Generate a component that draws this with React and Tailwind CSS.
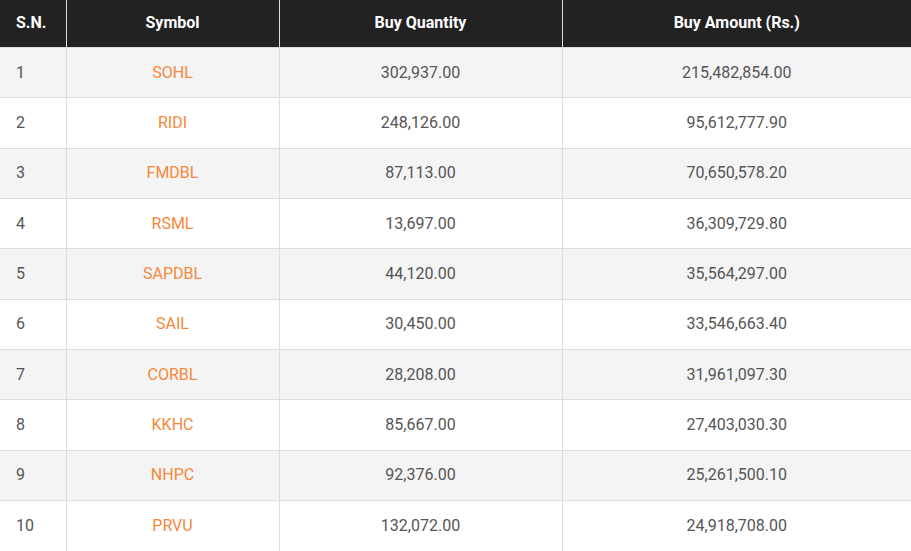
import React from "react";

const rows = [
  ["SOHL", "302,937.00", "215,482,854.00"],
  ["RIDI", "248,126.00", "95,612,777.90"],
  ["FMDBL", "87,113.00", "70,650,578.20"],
  ["RSML", "13,697.00", "36,309,729.80"],
  ["SAPDBL", "44,120.00", "35,564,297.00"],
  ["SAIL", "30,450.00", "33,546,663.40"],
  ["CORBL", "28,208.00", "31,961,097.30"],
  ["KKHC", "85,667.00", "27,403,030.30"],
  ["NHPC", "92,376.00", "25,261,500.10"],
  ["PRVU", "132,072.00", "24,918,708.00"],
];

const App = () => {
  return (
    <div className="w-[911px] h-[551px] overflow-hidden bg-white font-['Roboto',sans-serif]">
      <table className="w-full border-collapse table-fixed text-[16px]">
        <colgroup>
          <col className="w-[66px]" />
          <col className="w-[213px]" />
          <col className="w-[283px]" />
          <col />
        </colgroup>
        <thead>
          <tr className="bg-[#222222] text-white h-[47.5px]">
            <th className="text-left pl-4 pb-[2px] font-bold border-r border-[#dddddd]">S.N.</th>
            <th className="font-bold pb-[2px] border-r border-[#dddddd]">Symbol</th>
            <th className="font-bold pb-[2px] border-r border-[#dddddd]">Buy Quantity</th>
            <th className="font-bold pb-[2px]">Buy Amount (Rs.)</th>
          </tr>
        </thead>
        <tbody>
          {rows.map((r, i) => (
            <tr
              key={i}
              className={`h-[50.33px] border-t border-[#dddddd] text-[#555555] ${
                i % 2 === 0 ? "bg-[#f4f4f4]" : "bg-white"
              }`}
            >
              <td className="pl-4 border-r border-[#dddddd]">{i + 1}</td>
              <td className="text-center text-[#f5883a] border-r border-[#dddddd]">{r[0]}</td>
              <td className="text-center border-r border-[#dddddd]">{r[1]}</td>
              <td className="text-center">{r[2]}</td>
            </tr>
          ))}
        </tbody>
      </table>
    </div>
  );
};

export default App;
